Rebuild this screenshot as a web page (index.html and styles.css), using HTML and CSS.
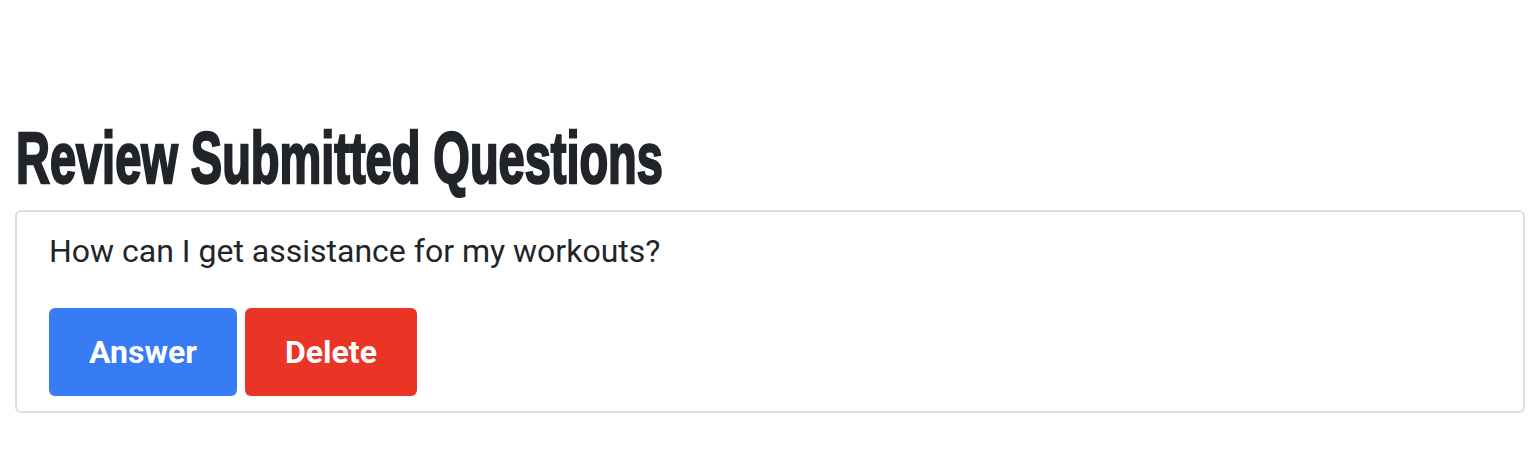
FILE: index.html
```html
<!DOCTYPE html>
<html>
<head>
<meta charset="utf-8">
<link rel="stylesheet" href="styles.css">
</head>
<body>
<div class="page">
  <div class="spacer"></div>
  <h1 class="title"><span class="title-text">Review Submitted Questions</span></h1>
  <div class="card">
    <p class="question">How can I get assistance for my workouts?</p>
    <div class="actions">
      <button class="btn btn-answer">Answer</button>
      <button class="btn btn-delete">Delete</button>
    </div>
  </div>
</div>
</body>
</html>
```

FILE: styles.css
```css
html, body {
  margin: 0;
  padding: 0;
  background: #ffffff;
  font-family: Roboto, "Liberation Sans", sans-serif;
  color: #212529;
}
.page {
  padding: 0 13px 0 15px;
}
.spacer {
  height: 116px;
}
.title {
  margin: 0 0 0 1px;
  height: 88px;
  line-height: 84px;
  font-family: "Liberation Sans Narrow", "Liberation Sans", sans-serif;
  font-weight: 700;
  font-size: 72px;
  color: #212529;
  white-space: nowrap;
}
.title-text {
  display: inline-block;
  -webkit-text-stroke: 2.5px #212529;
  transform: scaleX(0.652);
  transform-origin: left center;
}
.card {
  margin-top: 6px;
  border: 2px solid #dedede;
  border-radius: 6px;
  padding: 20px 32px 15px 32px;
}
.question {
  margin: 0;
  font-size: 32px;
  line-height: 38px;
}
.actions {
  display: flex;
  gap: 8px;
  margin-top: 38px;
}
.btn {
  border: none;
  border-radius: 6px;
  color: #ffffff;
  font-family: Roboto, "Liberation Sans", sans-serif;
  font-weight: 700;
  font-size: 32px;
  height: 88px;
  padding: 0;
  cursor: pointer;
}
.btn-answer {
  background: #387cf5;
  width: 188px;
}
.btn-delete {
  background: #e93426;
  width: 172px;
}
```
